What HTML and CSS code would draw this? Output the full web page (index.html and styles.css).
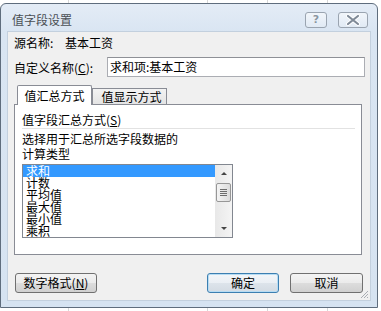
FILE: index.html
```html
<!DOCTYPE html>
<html lang="zh-CN">
<head>
    <meta charset="UTF-8">
    <title>值字段设置</title>
    <link rel="stylesheet" href="styles.css">
</head>
<body>
    <div class="window">
        <div class="titlebar">
            <span class="title">值字段设置</span>
            <div class="caption-btns">
                <div class="cap help"><span>?</span></div>
                <div class="cap close">
                    <svg width="28" height="14" viewBox="0 0 28 14">
                        <path d="M9 3 L19 11 M19 3 L9 11" stroke="#fff" stroke-width="4" stroke-linecap="round"/>
                        <path d="M9 3 L19 11 M19 3 L9 11" stroke="#7f8a97" stroke-width="2.2" stroke-linecap="round"/>
                    </svg>
                </div>
            </div>
        </div>
        <div class="client">
            <div class="row source">
                <span class="source-label">源名称:</span>
                <span>基本工资</span>
            </div>
            <div class="row custom">
                <span class="custom-label">自定义名称(<u>C</u>):</span>
                <div class="textbox">求和项:基本工资</div>
            </div>
            <div class="tabs">
                <div class="tab active">值汇总方式</div>
                <div class="tab">值显示方式</div>
            </div>
            <div class="panel">
                <div class="group-title">值字段汇总方式(<u>S</u>)</div>
                <div class="separator"></div>
                <div class="hint">选择用于汇总所选字段数据的<br>计算类型</div>
                <div class="listbox">
                    <ul class="items">
                        <li class="selected">求和</li>
                        <li>计数</li>
                        <li>平均值</li>
                        <li>最大值</li>
                        <li>最小值</li>
                        <li>乘积</li>
                    </ul>
                    <div class="scrollbar">
                        <div class="sb-btn"><span class="arrow up"></span></div>
                        <div class="thumb"><i></i><i></i><i></i><i></i></div>
                        <div class="sb-track"></div>
                        <div class="sb-btn"><span class="arrow down"></span></div>
                    </div>
                </div>
            </div>
            <div class="footer">
                <button class="btn number-fmt">数字格式(<u>N</u>)</button>
                <div class="actions">
                    <button class="btn default">确定</button>
                    <button class="btn">取消</button>
                </div>
            </div>
            <svg class="grip" width="9" height="9" viewBox="0 0 9 9">
                <path d="M8 1 L1 8 M8 4 L4 8 M8 7 L7 8" stroke="#a9adb3" stroke-width="1"/>
            </svg>
        </div>
    </div>
</body>
</html>
```

FILE: styles.css
```css
body {
    margin: 0;
    width: 381px;
    height: 311px;
    overflow: hidden;
    font-family: "Noto Sans CJK SC", "Liberation Sans", sans-serif;
    font-size: 12px;
    color: #000;
    background-color: #fff;
    background-image:
        linear-gradient(to right, transparent 68px, #d8d8d8 68px, #d8d8d8 69px, transparent 69px),
        linear-gradient(to right, transparent 207px, #d8d8d8 207px, #d8d8d8 208px, transparent 208px),
        linear-gradient(to right, transparent 267px, #d8d8d8 267px, #d8d8d8 268px, transparent 268px),
        linear-gradient(to right, transparent 327px, #d8d8d8 327px, #d8d8d8 328px, transparent 328px);
}
.window {
    position: relative;
    margin-top: 3px;
    width: 378px;
    height: 305px;
    box-sizing: border-box;
    border: 1px solid #5f6d7d;
    border-radius: 6px 6px 0 0;
    background: linear-gradient(#e4ecf6, #d9e5f2 28px, #d6e3f1);
    padding: 0 7px 7px 7px;
    display: flex;
    flex-direction: column;
}
.titlebar {
    height: 28px;
    box-sizing: border-box;
    padding: 4px 2px 0 4px;
    display: flex;
    align-items: center;
    justify-content: space-between;
}
.title {
    color: #4a4f55;
    line-height: 14px;
}
.caption-btns {
    display: flex;
    gap: 11px;
}
.cap {
    height: 16px;
    box-sizing: border-box;
    border: 1px solid #9aa4b0;
    border-radius: 3px;
    background: linear-gradient(rgba(255,255,255,0.55), rgba(255,255,255,0.15));
    display: flex;
    align-items: center;
    justify-content: center;
}
.cap.help { width: 22px; }
.cap.close { width: 30px; }
.cap.help span {
    font-family: "DejaVu Sans", sans-serif;
    font-weight: bold;
    font-size: 11px;
    line-height: 14px;
    color: #8995a2;
    text-shadow: 0 0 1px #fff;
}
.client {
    position: relative;
    flex: 1;
    background: #f0f0f0;
    box-shadow: 0 0 0 1px #c3d0de;
    padding: 4px 5px 0 6px;
    display: flex;
    flex-direction: column;
}
.row {
    display: flex;
    align-items: center;
}
.source {
    height: 14px;
    line-height: 14px;
}
.source-label {
    width: 51px;
}
.custom {
    margin-top: 7px;
    height: 20px;
}
.custom-label {
    width: 93px;
}
.textbox {
    width: 258px;
    height: 20px;
    box-sizing: border-box;
    border: 1px solid #abadb3;
    border-top-color: #8e9096;
    background: #fff;
    padding-left: 2px;
    line-height: 18px;
}
.tabs {
    margin-top: 8px;
    height: 20px;
    margin-bottom: -1px;
    padding-left: 3px;
    display: flex;
    align-items: flex-end;
    position: relative;
    z-index: 1;
}
.tab {
    width: 75px;
    box-sizing: border-box;
    border: 1px solid #898c95;
    border-bottom: none;
    text-align: center;
}
.tab.active {
    height: 20px;
    line-height: 20px;
    background: #fff;
    border-radius: 2px 2px 0 0;
}
.tab:not(.active) {
    height: 16px;
    line-height: 16px;
    margin-bottom: 1px;
    padding-left: 4px;
    background: linear-gradient(#f3f3f3, #e4e4e4);
}
.panel {
    width: 348px;
    height: 151px;
    box-sizing: border-box;
    border: 1px solid #898c95;
    background: #fff;
    padding: 8px 6px 0 7px;
}
.group-title {
    line-height: 14px;
}
.separator {
    margin-top: 1px;
    height: 1px;
    background: #e2e2e2;
}
.hint {
    margin-top: 2px;
    line-height: 15px;
}
.listbox {
    margin-top: 3px;
    width: 211px;
    height: 74px;
    box-sizing: border-box;
    border: 1px solid #828790;
    display: flex;
}
.items {
    flex: 1;
    list-style: none;
    margin: 0;
    padding: 0;
}
.items li {
    height: 12px;
    line-height: 12px;
    font-size: 12px;
    padding-left: 3px;
}
.items li.selected {
    background: #3399ff;
    color: #fff;
}
.scrollbar {
    width: 17px;
    display: flex;
    flex-direction: column;
    background: linear-gradient(to right, #e8e8e8, #f4f4f4);
}
.sb-btn {
    height: 17px;
    display: flex;
    align-items: center;
    justify-content: center;
}
.arrow {
    width: 0;
    height: 0;
    border-left: 3px solid transparent;
    border-right: 3px solid transparent;
}
.arrow.up { border-bottom: 3px solid #444; }
.arrow.down { border-top: 3px solid #444; }
.thumb {
    margin: 1px 1px 0 1px;
    height: 19px;
    box-sizing: border-box;
    border: 1px solid #979797;
    border-radius: 2px;
    background: linear-gradient(to right, #f4f4f4, #dcdcdc);
    display: flex;
    flex-direction: column;
    align-items: center;
    justify-content: center;
    gap: 1px;
}
.thumb i {
    display: block;
    width: 7px;
    height: 1px;
    background: #6d6d6d;
}
.sb-track {
    flex: 1;
}
.footer {
    margin-top: 18px;
    padding-right: 2px;
    display: flex;
    justify-content: space-between;
}
.actions {
    display: flex;
    gap: 11px;
}
.btn {
    height: 20px;
    width: 73px;
    padding: 0;
    box-sizing: border-box;
    border: 1px solid #707070;
    border-radius: 3px;
    background: linear-gradient(#f3f3f3 0%, #ebebeb 50%, #dddddd 50%, #d0d0d0 100%);
    font-family: "Noto Sans CJK SC", sans-serif;
    font-size: 12px;
    line-height: 18px;
    color: #000;
}
.btn.number-fmt {
    width: 82px;
    margin-left: 1px;
}
.btn.default {
    width: 72px;
    border-color: #3c7fb1;
    box-shadow: inset 0 0 0 1px #b7dcf3;
    background: linear-gradient(#f3f6f9 0%, #eaeff4 50%, #dde4eb 50%, #d3dbe3 100%);
}
.grip {
    position: absolute;
    right: 1px;
    bottom: 1px;
}
```
